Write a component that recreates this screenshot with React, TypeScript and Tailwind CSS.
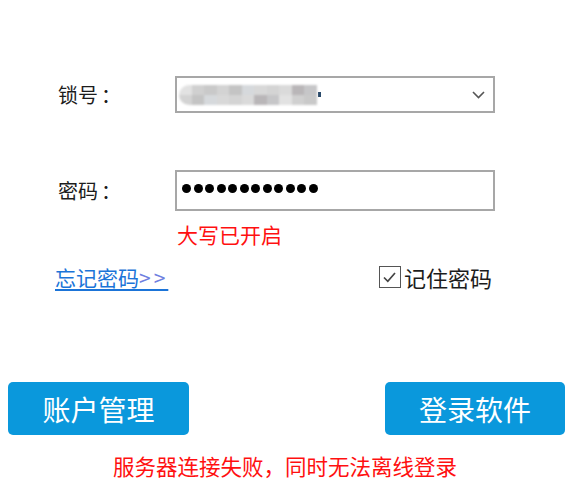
import React from 'react'

const font = { fontFamily: '"Noto Sans CJK SC", "Noto Sans", sans-serif' }

// Pixel mosaic that hides the account number in the select
const mosaic = ['#e2e2e2', '#d0d0d0', '#c9c9c9', '#d3d3d3', '#c4c4c4', '#d6d9dc', '#d8d8d8', '#d4d4d4', '#dadada', '#b9b6b8', '#c6c6c8']

function Chevron() {
  return (
    <svg className="h-[8px] w-[13px]" viewBox="0 0 13 8" fill="none">
      <path d="M1 1l5.5 5.5L12 1" stroke="#555" strokeWidth={1.6} />
    </svg>
  )
}

export default function App() {
  return (
    <div className="flex h-[493px] w-[570px] flex-col bg-white text-[#1c1c1c]" style={font}>
      {/* 锁号 */}
      <div className="mt-[76px] flex h-[37px] items-center">
        <span className="ml-[58px] w-[117px] text-[20px] leading-none">
          锁号<span className="ml-[3px]">：</span>
        </span>
        <div className="flex h-[37px] w-[320px] items-center border-2 border-[#a7a7a7] bg-white pl-[2px] pr-[8px]">
          <div className="flex h-[20px] overflow-hidden rounded-l-full blur-[0.8px]">
            {mosaic.map((c, i) => (
              <div key={i} className="flex w-[12.5px] flex-col">
                <div className="h-[10px]" style={{ background: c }} />
                <div className="h-[10px]" style={{ background: mosaic[(i + 3) % mosaic.length] }} />
              </div>
            ))}
          </div>
          <div className="ml-[1px] h-[5px] w-[3px] bg-[#2a4a6a]" />
          <div className="ml-auto">
            <Chevron />
          </div>
        </div>
      </div>

      {/* 密码 */}
      <div className="mt-[57px] flex h-[41px] items-center">
        <span className="ml-[58px] w-[117px] text-[20px] leading-none">
          密码<span className="ml-[3px]">：</span>
        </span>
        <div className="flex h-[41px] w-[320px] items-center gap-[2.5px] border-2 border-[#a7a7a7] bg-white pb-[4px] pl-[5px]">
          {Array.from({ length: 12 }).map((_, i) => (
            <div key={i} className="h-[9px] w-[9px] rounded-full bg-black" />
          ))}
        </div>
      </div>

      <div className="ml-[177px] mt-[12px] text-[21px] leading-[22px] text-[#ff1010]">大写已开启</div>

      {/* 忘记密码 / 记住密码 */}
      <div className="mt-[20px] flex h-[24px] items-center">
        <a className="ml-[55px] text-[21px] leading-none text-[#1b74d8] underline underline-offset-[3px]">
          忘记密码<span className="tracking-[3px] text-[#6f7fe0]">&gt;&gt;</span>
        </a>
        <label className="ml-auto mr-[78px] flex items-center gap-[3px] text-[22px] leading-none">
          <span className="flex h-[22px] w-[22px] items-center justify-center border-[1.5px] border-[#555] bg-white">
            <svg className="h-[13px] w-[13px]" viewBox="0 0 13 13" fill="none">
              <path d="M1 6.5l3.8 3.8L12 2" stroke="#444" strokeWidth={1.7} />
            </svg>
          </span>
          记住密码
        </label>
      </div>

      {/* Buttons */}
      <div className="mt-[93px] flex h-[53px]">
        <button
          type="button"
          className="ml-[8px] h-[53px] w-[181px] rounded-[5px] bg-[#0a98dc] text-[28px] leading-none text-white"
        >
          账户管理
        </button>
        <button
          type="button"
          className="ml-auto mr-[5px] h-[53px] w-[180px] rounded-[5px] bg-[#0a98dc] text-[28px] leading-none text-white"
        >
          登录软件
        </button>
      </div>

      <div className="mt-[20px] text-center text-[21.5px] leading-[22px] text-[#ff1010]">
        服务器连接失败，同时无法离线登录
      </div>
    </div>
  )
}
